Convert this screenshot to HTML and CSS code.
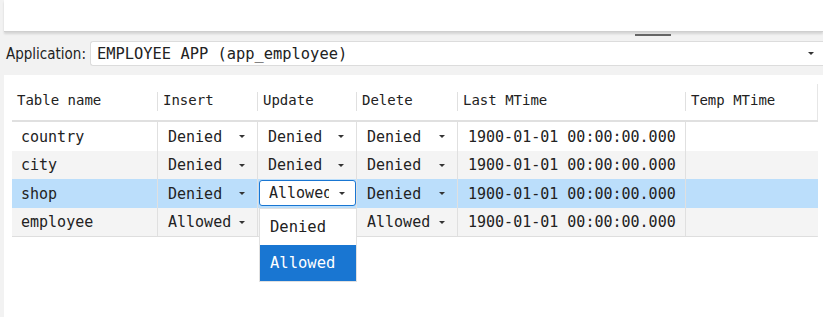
FILE: index.html
```html
<!DOCTYPE html>
<html>
<head>
<meta charset="utf-8">
<link rel="stylesheet" href="styles.css">
</head>
<body>
<div class="top-panel"></div>
<div class="splitter"><span class="handle"></span></div>
<div class="app-row">
  <label class="app-label">Application:</label>
  <div class="app-combo">
    <span class="app-value">EMPLOYEE APP (app_employee)</span>
    <span class="arrow"></span>
  </div>
</div>
<div class="table-panel">
  <div class="grid">
    <div class="hcell first">Table name</div>
    <div class="hcell">Insert</div>
    <div class="hcell">Update</div>
    <div class="hcell">Delete</div>
    <div class="hcell">Last MTime</div>
    <div class="hcell">Temp MTime</div>

    <div class="row">
      <div class="cell first">country</div>
      <div class="cell combo"><span>Denied</span><span class="arrow"></span></div>
      <div class="cell combo"><span>Denied</span><span class="arrow"></span></div>
      <div class="cell combo"><span>Denied</span><span class="arrow"></span></div>
      <div class="cell">1900-01-01 00:00:00.000</div>
      <div class="cell"></div>
    </div>
    <div class="row alt">
      <div class="cell first">city</div>
      <div class="cell combo"><span>Denied</span><span class="arrow"></span></div>
      <div class="cell combo"><span>Denied</span><span class="arrow"></span></div>
      <div class="cell combo"><span>Denied</span><span class="arrow"></span></div>
      <div class="cell">1900-01-01 00:00:00.000</div>
      <div class="cell"></div>
    </div>
    <div class="row selected">
      <div class="cell first">shop</div>
      <div class="cell combo"><span>Denied</span><span class="arrow"></span></div>
      <div class="cell editing">
        <div class="edit-box"><span class="edit-text">Allowed</span><span class="arrow"></span></div>
        <div class="popup">
          <div class="opt">Denied</div>
          <div class="opt active">Allowed</div>
        </div>
      </div>
      <div class="cell combo"><span>Denied</span><span class="arrow"></span></div>
      <div class="cell">1900-01-01 00:00:00.000</div>
      <div class="cell"></div>
    </div>
    <div class="row alt">
      <div class="cell first">employee</div>
      <div class="cell combo"><span>Allowed</span><span class="arrow"></span></div>
      <div class="cell"></div>
      <div class="cell combo"><span>Allowed</span><span class="arrow"></span></div>
      <div class="cell">1900-01-01 00:00:00.000</div>
      <div class="cell"></div>
    </div>
  </div>
</div>
</body>
</html>
```
FILE: styles.css
```css
html, body {
  margin: 0;
  padding: 0;
  height: 100%;
}
body {
  background: #f2f2f2;
  font-family: "DejaVu Sans Mono", monospace;
  color: #222;
  display: flex;
  flex-direction: column;
  overflow: hidden;
}
.top-panel {
  height: 31px;
  margin-left: 4px;
  background: #fff;
  border-bottom: 1px solid #cfcfcf;
  box-shadow: 0 2px 2px rgba(0,0,0,0.12);
  flex: none;
}
.splitter {
  height: 8px;
  display: flex;
  align-items: center;
  padding-left: 635px;
  flex: none;
}
.handle {
  width: 36px;
  height: 2px;
  background: #666;
  margin-top: -3px;
}
.app-row {
  display: flex;
  align-items: center;
  height: 27px;
  flex: none;
}
.app-label {
  font-family: "DejaVu Sans Condensed", "DejaVu Sans", sans-serif;
  font-stretch: condensed;
  font-size: 15px;
  color: #222;
  padding-left: 6px;
  width: 84px;
}
.app-combo {
  flex: 1;
  height: 25px;
  background: #fff;
  border: 1px solid #dcdcdc;
  border-right: none;
  border-radius: 3px 0 0 3px;
  display: flex;
  align-items: center;
  padding-left: 6px;
  padding-right: 9px;
  box-sizing: border-box;
}
.app-value {
  flex: 1;
  font-size: 15.4px;
}
.arrow {
  width: 0;
  height: 0;
  border-left: 3px solid transparent;
  border-right: 3px solid transparent;
  border-top: 3.5px solid #333;
}
.table-panel {
  margin-top: 8px;
  margin-left: 4px;
  background: #fff;
  flex: 1;
  padding: 9px 5px 0 8px;
}
.grid {
  display: grid;
  grid-template-columns: 145px 100px 99px 101px 228px 133px;
  border-bottom: 1px solid #dedede;
  border-right: 1px solid #e6e6e6;
}
.hcell {
  height: 38px;
  font-size: 14px;
  display: flex;
  align-items: center;
  padding-left: 6px;
  padding-bottom: 4px;
  box-sizing: border-box;
  border-bottom: 2px solid #e0e0e0;
  position: relative;
}
.hcell::before {
  content: "";
  position: absolute;
  left: 0;
  top: 8px;
  height: 19px;
  border-left: 1px solid #e0e0e0;
}
.hcell.first { padding-left: 5px; }
.hcell.first::before { display: none; }
.row {
  display: contents;
}
.cell {
  height: 28.5px;
  font-size: 15px;
  display: flex;
  align-items: center;
  padding-left: 10px;
  padding-top: 1px;
  box-sizing: border-box;
  border-left: 1px solid #e0e0e0;
  background: #fff;
}
.cell.first {
  border-left: none;
  padding-left: 9px;
}
.row.alt .cell { background: #f4f4f4; }
.row.selected .cell { background: #bbdefb; }
.combo {
  padding-right: 12px;
}
.combo span:first-child {
  flex: 1;
}
.editing {
  position: relative;
  padding: 0 0 0 1px;
}
.edit-box {
  width: 97px;
  height: 26px;
  background: #fff;
  border: 1px solid #1976d2;
  border-radius: 3px;
  box-sizing: border-box;
  display: flex;
  align-items: center;
  padding-left: 9px;
  padding-right: 10px;
}
.edit-text {
  width: 62px;
  overflow: hidden;
  white-space: nowrap;
  margin-right: 10px;
}
.popup {
  position: absolute;
  left: 1px;
  top: 28.5px;
  width: 98px;
  background: #fff;
  border: 1px solid #e0e0e0;
  box-sizing: border-box;
  z-index: 5;
}
.opt {
  height: 36px;
  display: flex;
  align-items: center;
  padding-left: 10px;
  padding-top: 1px;
  box-sizing: border-box;
  font-size: 15.5px;
  color: #222;
}
.opt.active {
  background: #1976d2;
  color: #fff;
}
```
